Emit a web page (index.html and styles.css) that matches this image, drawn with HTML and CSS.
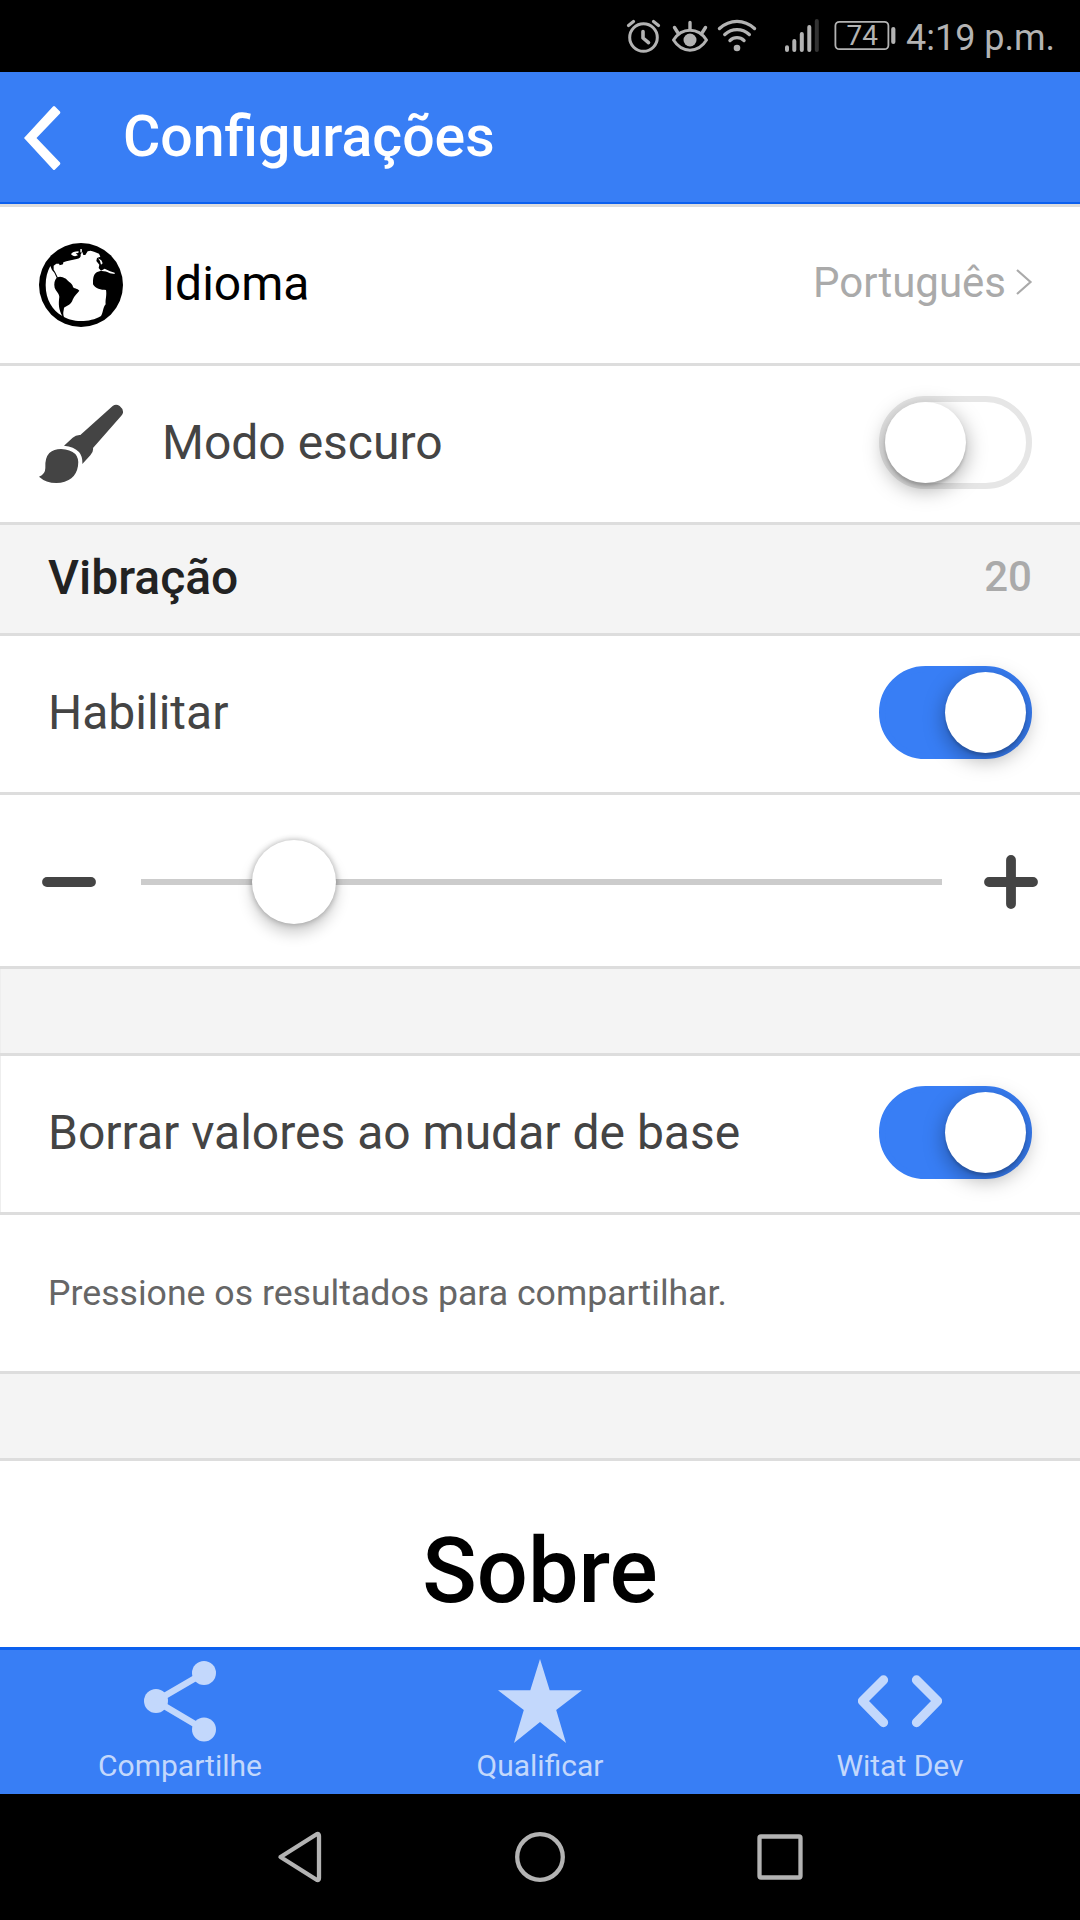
FILE: index.html
```html
<!DOCTYPE html>
<html lang="pt">
<head>
<meta charset="utf-8">
<title>Configurações</title>
<link rel="stylesheet" href="styles.css">
</head>
<body>
<div class="screen">
  <div class="status">
    <svg class="status-icons" viewBox="620 0 280 72">
      <g fill="none" stroke="#b3b3b3" stroke-width="3" stroke-linecap="round" stroke-linejoin="round">
        <circle cx="643.5" cy="37.5" r="13.8"/>
        <path d="M643 31.500V38L648.500 42.700" stroke-width="3.600"/>
        <path d="M628.500 25.500L633.500 21.500M658.500 25.500L653.500 21.500" stroke-width="3.200"/>
        <path d="M673.500 40C682 27 698 27 706.500 40C698 53.500 682 53.500 673.500 40Z"/>
        <path d="M690 22.500V29M674.500 27.500L678 33M705.500 27.500L702 33" stroke-width="3.400"/>
        <path d="M719.500 28.500C730 19 744 19 754.500 28.500M724.800 34.500C732 28 742 28 749.300 34.500M730 40.500C734 36.700 740 36.700 744 40.500" stroke-width="3.400"/>
        <path d="M787 47.300V50M794.300 41V50M801.800 34V50M809.300 27V50" stroke-width="4"/>
        <path d="M816.800 21V50" stroke="#333" stroke-width="4"/>
        <rect x="835.400" y="21.800" width="53" height="27.400" rx="4" stroke-width="1.800"/>
        <path d="M893.300 29V42" stroke-width="4.200"/>
      </g>
      <circle cx="690" cy="40" r="6.500" fill="#b3b3b3"/>
      <circle cx="737" cy="48" r="3.300" fill="#b3b3b3"/>
      <text class="battery" x="846.500" y="45.300">74</text>
    </svg>
    <span class="clock">4:19 p.m.</span>
  </div>

  <header class="header">
    <svg class="back" viewBox="24 105 37 66"><path fill="#fff" d="M24 138L53 106.500Q54 105.500 55 106.500L60 111.500Q60.700 112.500 60 113.500L36.500 138L60 162.500Q60.700 163.500 60 164.500L55 169.500Q54 170.500 53 169.500Z"/></svg>
    <h1 class="title">Configurações</h1>
  </header>

  <main class="list">
    <div class="row item strong">
      <svg class="item-icon" viewBox="57 69 252 252">
        <circle cx="183" cy="195" r="126"/>
        <path fill="#fff" d="M91 138L96 150L103 158L110 173C104 180 101 190 104 203C108 214 117 219 118 230C115 252 116 268 127 288C98 272 77 240 77 195C77 173 82 154 91 138Z"/>
        <path fill="#fff" d="M101 137L109 131H117L119 136L129 133L130 127C142 122 156 121 170 117C180 116 183 111 182 103L187 96L190 105L196 105L203 94L212 92L222 95L237 101L241 110L231 114L229 123L238 134L236 144L243 152L254 146L270 154L284 158V162L270 160C254 151 238 152 228 158C218 166 219 184 219 193C226 207 243 210 258 210C261 228 255 238 257 253C248 263 250 277 243 288C226 299 204 303 183 303C160 303 144 298 132 291C127 281 132 270 132 263C141 257 155 252 158 239C163 226 172 221 178 212C173 205 161 206 159 201C158 190 146 186 138 176C127 170 119 168 113 172L105 155L101 149Z"/>
        <path fill="#fff" d="M153 103C155 97 164 94 176 94L175 99L167 100L174 106L165 109L159 107Z"/>
        <path fill="#fff" d="M181 87L186 88L185 98L181 97ZM234 115L244 121L248 130L243 134L240 123Z"/>
      </svg>
      <span class="label">Idioma</span>
      <span class="note">Português</span>
      <svg class="chevron" viewBox="0 0 18 28"><path d="M2 2L15.500 14L2 26" fill="none" stroke="#aaa" stroke-width="2.200"/></svg>
    </div>
    <div class="row item">
      <svg class="item-icon" viewBox="57 546 252 252"><g fill="#444">
        <path d="M278 558Q288 551 299 558Q310 567 309 578Q308 582 304 587L219 684Q221 695 211 706L187 732Q188 709 177 696Q162 680 132 677L158 653Q168 644 181 645Z"/>
        <path d="M123 687Q151 688 166 702Q178 716 174 738Q170 762 154 775Q136 789 109 789Q78 789 57 770Q76 763 76 744Q74 714 88 699Q102 687 123 687Z"/>
      </g></svg>
      <span class="label">Modo escuro</span>
      <span class="toggle"><span class="handle"></span></span>
    </div>
    <div class="row divider">
      <span class="label">Vibração</span>
      <span class="note">20</span>
    </div>
    <div class="row item plain">
      <span class="label">Habilitar</span>
      <span class="toggle on"><span class="handle"></span></span>
    </div>
    <div class="row range">
      <svg class="sign" viewBox="0 0 54 54"><path d="M5 27H49"/></svg>
      <div class="track"><span class="knob"></span></div>
      <svg class="sign" viewBox="0 0 54 54"><path d="M5 27H49M27 5V49"/></svg>
    </div>
    <div class="row gap edge"></div>
    <div class="row item plain edge">
      <span class="label">Borrar valores ao mudar de base</span>
      <span class="toggle on"><span class="handle"></span></span>
    </div>
    <div class="row item plain">
      <span class="hint">Pressione os resultados para compartilhar.</span>
    </div>
    <div class="row gap"></div>
    <h2 class="about">Sobre</h2>
  </main>

  <footer class="tabs">
    <div class="tab">
      <svg class="tab-icon" viewBox="138 1659 84 84"><g fill="#c3d8fc"><circle cx="156" cy="1701" r="12"/><circle cx="204" cy="1673" r="12"/><circle cx="204" cy="1729.500" r="12"/></g><path d="M204 1673L156 1701L204 1729.500" fill="none" stroke="#c3d8fc" stroke-width="6.500"/></svg>
      <span>Compartilhe</span>
    </div>
    <div class="tab">
      <svg class="tab-icon" viewBox="498 1659 84 84"><path fill="#c3d8fc" d="M540 1659L549.700 1690.300H582L556.200 1710L566 1743L540 1722L514 1743L523.800 1710L498 1690.300H530.300Z"/></svg>
      <span>Qualificar</span>
    </div>
    <div class="tab">
      <svg class="tab-icon" viewBox="858 1659 84 84"><path d="M883.500 1680L862.500 1701L883.500 1722.500M916.500 1680L937.500 1701L916.500 1722.500" fill="none" stroke="#c3d8fc" stroke-width="9.300" stroke-linecap="round" stroke-linejoin="round"/></svg>
      <span>Witat Dev</span>
    </div>
  </footer>

  <nav class="system">
    <svg viewBox="270 1794 540 126"><g fill="none" stroke="#b3b3b3" stroke-width="4.300" stroke-linejoin="round">
      <path d="M280.500 1857L317 1834Q319 1833.500 319 1836V1878Q319 1880.500 317 1880Z"/>
      <circle cx="540" cy="1857" r="22.800"/>
      <rect x="759.500" y="1836.500" width="41" height="41" rx="1.500"/>
    </g></svg>
  </nav>
</div>
</body>
</html>
```
FILE: styles.css
```css
* { box-sizing: border-box; }

body {
  margin: 0;
  font-family: Roboto, "Liberation Sans", sans-serif;
  background: #fff;
}

.screen {
  width: 1080px;
  height: 1920px;
  display: flex;
  flex-direction: column;
  overflow: hidden;
}

svg { display: block; flex: none; }

.status {
  height: 72px;
  flex: none;
  background: #000;
  color: #b3b3b3;
  display: flex;
  justify-content: flex-end;
  padding-right: 24px;
}
.status-icons { width: 280px; height: 72px; }
.battery { font-size: 28px; fill: #b3b3b3; }
.clock {
  width: 156px;
  padding-left: 6px;
  font-size: 36px;
  line-height: 76px;
  white-space: nowrap;
}

.header {
  height: 132px;
  flex: none;
  background: #387ef5;
  border-bottom: 2px solid #0c60ee;
  display: flex;
  align-items: center;
  padding-left: 24px;
}
.back { width: 37px; height: 66px; margin-top: 2px; }
.title {
  margin: 0 0 0 62px;
  color: #fff;
  font-size: 57.2px;
  font-weight: 500;
  line-height: 126px;
}

.list {
  flex: 1;
  border-top: 3px solid #ddd;
  overflow: hidden;
}
.row {
  border-bottom: 3px solid #ddd;
  display: flex;
  align-items: center;
}
.item {
  height: 159px;
  padding: 0 48px 0 39px;
  color: #444;
}
.strong { color: #000; }
.plain { padding-left: 48px; }
.edge { box-shadow: inset 1px 0 #eee; }
.item-icon { width: 84px; height: 84px; margin-right: 39px; }
.label {
  font-size: 48px;
  line-height: 60px;
  flex: 1;
  white-space: nowrap;
  margin-top: -2px;
}
.note { font-size: 42px; line-height: 54px; color: #aaa; margin-top: -4px; }
.chevron { width: 18px; height: 28px; margin: -6px -1px 0 9px; }
.hint {
  font-size: 35.65px;
  line-height: 48px;
  color: #666;
}

.divider {
  height: 111px;
  padding: 0 48px;
  background: #f4f4f4;
  color: #222;
  font-weight: 500;
}
.gap { height: 87px; background: #f4f4f4; }

.toggle {
  width: 153px;
  height: 93px;
  flex: none;
  margin-top: -3px;
  border: 6px solid #e6e6e6;
  border-radius: 60px;
  background: #fff;
  display: flex;
}
.toggle.on {
  background: #387ef5;
  border-color: #387ef5;
  justify-content: flex-end;
}
.handle {
  width: 81px;
  height: 81px;
  border-radius: 50%;
  background: #fff;
  box-shadow: 0 6px 21px rgba(0, 0, 0, .35), 0 3px 3px rgba(0, 0, 0, .15);
}

.range {
  height: 174px;
  padding: 3px 42px 0;
  justify-content: space-between;
}
.sign {
  width: 54px;
  height: 54px;
  fill: none;
  stroke: #444;
  stroke-width: 9.8;
  stroke-linecap: round;
}
.track {
  width: 801px;
  height: 6px;
  margin-left: 3px;
  padding-left: 111px;
  background: #ccc;
  display: flex;
  align-items: center;
}
.knob {
  width: 84px;
  height: 84px;
  flex: none;
  border-radius: 50%;
  background: #fff;
  box-shadow: 0 0 6px rgba(0, 0, 0, .3), 0 9px 15px rgba(0, 0, 0, .2);
}

.about {
  margin: 0;
  padding-top: 57px;
  text-align: center;
  font-size: 90px;
  line-height: 108px;
  font-weight: 500;
  color: #000;
}

.tabs {
  height: 147px;
  flex: none;
  background: #387ef5;
  border-top: 3px solid #0c60ee;
  display: flex;
}
.tab {
  flex: 1;
  display: flex;
  flex-direction: column;
  align-items: center;
  padding-top: 9px;
  color: #c3d8fc;
  font-size: 30px;
  line-height: 36px;
}
.tab-icon { width: 84px; height: 84px; margin-bottom: 5px; }

.system {
  height: 126px;
  flex: none;
  background: #000;
  display: flex;
  justify-content: center;
}
.system svg { width: 540px; height: 126px; }
```
